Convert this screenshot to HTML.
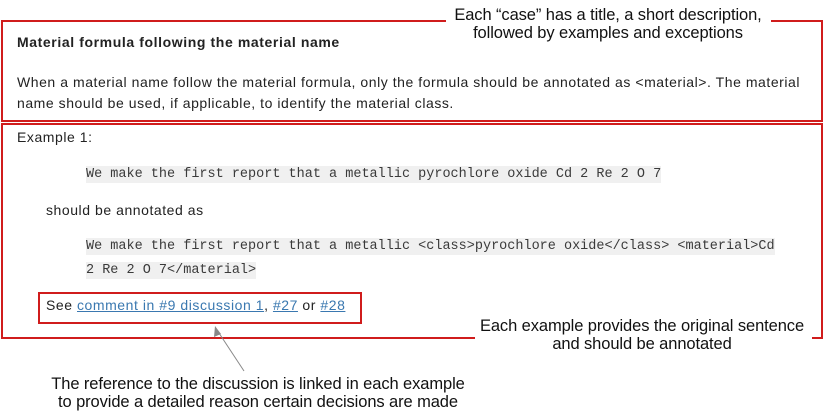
<!DOCTYPE html>
<html><head><meta charset="utf-8"><style>
body{margin:0;width:826px;height:419px;background:#fff;position:relative;overflow:hidden;font-family:"Liberation Sans",sans-serif;color:#222}
.a{position:absolute;white-space:nowrap}
.t{font-size:14px;letter-spacing:0.55px}
.code{font-family:"Liberation Mono",monospace;font-size:13.5px;background:#f0f0f0;color:#3a3a3a;padding:1px 0}
.ann{font-size:16.5px;line-height:18px;color:#111;text-align:center;letter-spacing:-0.1px}
.ln{position:absolute;background:#d01c1c}
a{color:#3a78b0;text-decoration:underline}
</style></head><body>
<div class="ln" style="left:1px;top:20px;width:445px;height:2px"></div>
<div class="ln" style="left:771px;top:20px;width:52px;height:2px"></div>
<div class="ln" style="left:1px;top:20px;width:2px;height:102px"></div>
<div class="ln" style="left:821px;top:20px;width:2px;height:102px"></div>
<div class="ln" style="left:1px;top:120px;width:822px;height:2px"></div>
<div class="ln" style="left:1px;top:123px;width:822px;height:2px"></div>
<div class="ln" style="left:1px;top:123px;width:2px;height:216px"></div>
<div class="ln" style="left:821px;top:123px;width:2px;height:216px"></div>
<div class="ln" style="left:1px;top:337px;width:474px;height:2px"></div>
<div class="ln" style="left:812px;top:337px;width:11px;height:2px"></div>
<div style="position:absolute;left:38px;top:292px;width:320px;height:28px;border:2px solid #d01c1c"></div>

<div class="a ann" style="left:428px;top:6px;width:360px">Each “case” has a title, a short description,<br>followed by examples and exceptions</div>
<div class="a t" style="left:17px;top:34px;font-weight:bold;letter-spacing:0.6px">Material formula following the material name</div>
<div class="a t" style="left:17px;top:72px;line-height:21px">When a material name follow the material formula, only the formula should be annotated as &lt;material&gt;. The material<br>name should be used, if applicable, to identify the material class.</div>
<div class="a t" style="left:17px;top:129px">Example 1:</div>
<div class="a" style="left:86px;top:164px"><span class="code">We make the first report that a metallic pyrochlore oxide Cd 2 Re 2 O 7</span></div>
<div class="a t" style="left:46px;top:202px">should be annotated as</div>
<div class="a" style="left:86px;top:236px"><span class="code">We make the first report that a metallic &lt;class&gt;pyrochlore oxide&lt;/class&gt; &lt;material&gt;Cd</span></div>
<div class="a" style="left:86px;top:260px"><span class="code">2 Re 2 O 7&lt;/material&gt;</span></div>
<div class="a t" style="left:46px;top:297px">See <a>comment in #9 discussion 1</a>, <a>#27</a> or <a>#28</a></div>
<div class="a ann" style="left:462px;top:317px;width:360px">Each example provides the original sentence<br>and should be annotated</div>
<svg class="a" style="left:0;top:0" width="826" height="419"><line x1="244" y1="371" x2="217" y2="330" stroke="#888" stroke-width="1"/><path d="M215 326 L214 337 L221 334 Z" fill="#888"/></svg>
<div class="a ann" style="left:28px;top:375px;width:460px">The reference to the discussion is linked in each example<br>to provide a detailed reason certain decisions are made</div>
</body></html>
